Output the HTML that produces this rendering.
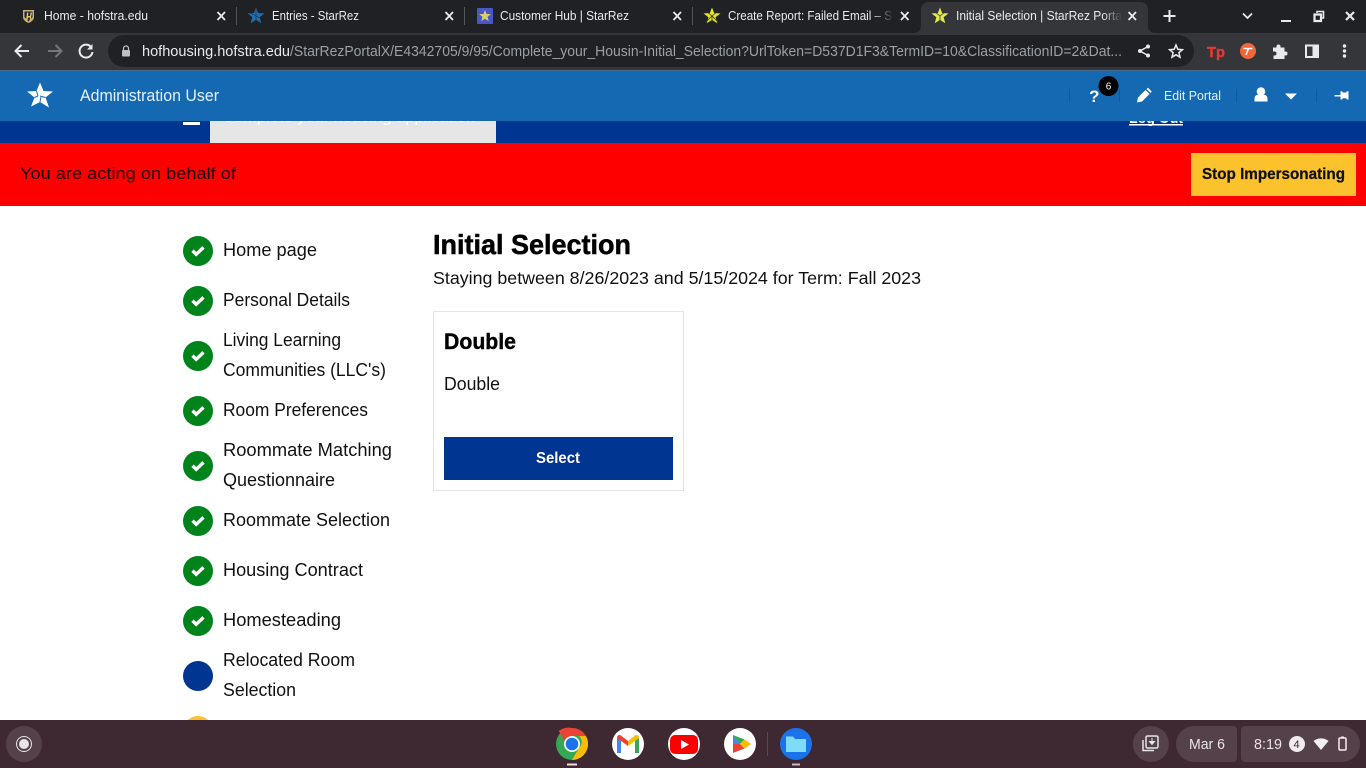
<!DOCTYPE html>
<html><head><meta charset="utf-8"><title>Initial Selection | StarRez Portal</title>
<style>
html,body{margin:0;padding:0;width:1366px;height:768px;overflow:hidden;background:#fff}
svg{display:block}
text{font-family:"Liberation Sans",sans-serif}
.c{font-size:12.500px;fill:#e8eaed}
.p{font-size:18px;fill:#111}
.x{stroke:#e8eaed;stroke-width:1.800;fill:none}
</style></head><body>
<svg width="1366" height="768" viewBox="0 0 1366 768" xmlns="http://www.w3.org/2000/svg">
<defs>
<linearGradient id="f1"><stop offset="0" stop-color="#202124" stop-opacity="0"/><stop offset="1" stop-color="#202124"/></linearGradient>
<linearGradient id="f2"><stop offset="0" stop-color="#35363a" stop-opacity="0"/><stop offset="1" stop-color="#35363a"/></linearGradient>
<path id="star" d="M0-8.500 2.200-2.900 8.500-2.600 3.600 1.200 5.300 7.300 0 3.900-5.300 7.300-3.600 1.200-8.500-2.600-2.200-2.900Z"/>
<path id="chk" d="M-5.500-.3-1.800 3.300 5.500-3.600" fill="none" stroke="#fff" stroke-width="3.400"/>
</defs>

<!-- page -->
<rect width="1366" height="768" fill="#fff"/>
<rect y="121" width="1366" height="22" fill="#003591"/>
<rect x="183" y="122" width="17" height="3" fill="#fff"/>
<rect x="210" y="121" width="286" height="22" fill="#e6e6e6"/>
<text x="222" y="122" font-size="15" fill="#fff" textLength="253" lengthAdjust="spacingAndGlyphs">Complete your housing application</text>
<text x="1129" y="123" font-size="15" font-weight="bold" fill="#fff" textLength="54" lengthAdjust="spacingAndGlyphs">Log Out</text>
<rect x="1129" y="124" width="54" height="1.500" fill="#fff"/>
<rect y="143" width="1366" height="63" fill="#f00"/>
<text x="20" y="179" font-size="17" fill="#200000" textLength="216" lengthAdjust="spacingAndGlyphs">You are acting on behalf of</text>
<rect x="1191" y="153" width="165" height="43" fill="#fcc22d"/>
<text x="1202" y="179" font-size="16" font-weight="bold" fill="#111" stroke="#111" stroke-width=".25" textLength="143" lengthAdjust="spacingAndGlyphs">Stop Impersonating</text>

<!-- sidebar -->
<g fill="#00831a">
<circle cx="198" cy="251" r="15"/><circle cx="198" cy="301" r="15"/><circle cx="198" cy="356" r="15"/><circle cx="198" cy="411" r="15"/><circle cx="198" cy="466" r="15"/><circle cx="198" cy="521" r="15"/><circle cx="198" cy="571" r="15"/><circle cx="198" cy="621" r="15"/>
</g>
<use href="#chk" x="198" y="251"/><use href="#chk" x="198" y="301"/><use href="#chk" x="198" y="356"/><use href="#chk" x="198" y="411"/><use href="#chk" x="198" y="466"/><use href="#chk" x="198" y="521"/><use href="#chk" x="198" y="571"/><use href="#chk" x="198" y="621"/>
<circle cx="198" cy="676" r="15" fill="#003591"/>
<circle cx="198" cy="731" r="15" fill="#fcc22d"/>
<text class="p" x="223" y="256" textLength="94" lengthAdjust="spacingAndGlyphs">Home page</text>
<text class="p" x="223" y="306" textLength="127" lengthAdjust="spacingAndGlyphs">Personal Details</text>
<text class="p" x="223" y="346" textLength="118" lengthAdjust="spacingAndGlyphs">Living Learning</text>
<text class="p" x="223" y="376" textLength="163" lengthAdjust="spacingAndGlyphs">Communities (LLC's)</text>
<text class="p" x="223" y="416" textLength="145" lengthAdjust="spacingAndGlyphs">Room Preferences</text>
<text class="p" x="223" y="456" textLength="169" lengthAdjust="spacingAndGlyphs">Roommate Matching</text>
<text class="p" x="223" y="486" textLength="112" lengthAdjust="spacingAndGlyphs">Questionnaire</text>
<text class="p" x="223" y="526" textLength="167" lengthAdjust="spacingAndGlyphs">Roommate Selection</text>
<text class="p" x="223" y="576" textLength="140" lengthAdjust="spacingAndGlyphs">Housing Contract</text>
<text class="p" x="223" y="626" textLength="118" lengthAdjust="spacingAndGlyphs">Homesteading</text>
<text class="p" x="223" y="666" textLength="132" lengthAdjust="spacingAndGlyphs">Relocated Room</text>
<text class="p" x="223" y="696" textLength="73" lengthAdjust="spacingAndGlyphs">Selection</text>

<!-- main -->
<text x="433" y="254" font-size="28" font-weight="bold" fill="#000" stroke="#000" stroke-width=".5" textLength="198" lengthAdjust="spacingAndGlyphs">Initial Selection</text>
<text x="433" y="284" font-size="17.500" fill="#111" textLength="488" lengthAdjust="spacingAndGlyphs">Staying between 8/26/2023 and 5/15/2024 for Term: Fall 2023</text>
<rect x="433.500" y="311.500" width="250" height="179" fill="#fff" stroke="#e2e6ea"/>
<text x="444" y="349" font-size="22" font-weight="bold" fill="#000" stroke="#000" stroke-width=".4" textLength="72" lengthAdjust="spacingAndGlyphs">Double</text>
<text x="444" y="390" font-size="18" fill="#111" textLength="56" lengthAdjust="spacingAndGlyphs">Double</text>
<rect x="444" y="437" width="229" height="43" fill="#003591"/>
<text x="536" y="463" font-size="15.500" font-weight="bold" fill="#fff" textLength="44" lengthAdjust="spacingAndGlyphs">Select</text>

<!-- portal header -->
<rect y="70" width="1366" height="51" fill="#1569b3"/>
<rect y="70" width="1366" height="1" fill="#4a6a8c"/>
<path d="M40 82.500 43.500 91 53 91.500 45.500 97.500 49 107.500 40 102 31 106.500 34.500 97.500 27 91.500 36.500 91Z" fill="#fff"/>
<path d="M36.500 91 38 96 M45.500 97.500 40 96 M40 102 41 97 M34.500 97.500 38 96" stroke="#1569b3" stroke-width="1" fill="none"/>
<text x="80" y="101" font-size="16.500" fill="#e3f0fb" textLength="139" lengthAdjust="spacingAndGlyphs">Administration User</text>
<g fill="#0f5a9c"><rect x="1069" y="89" width="1" height="13"/><rect x="1119" y="89" width="1" height="13"/><rect x="1236" y="89" width="1" height="13"/><rect x="1316" y="89" width="1" height="13"/></g>
<text x="1089" y="102" font-size="17" font-weight="bold" fill="#fff">?</text>
<circle cx="1108.500" cy="86" r="10" fill="#000"/>
<text x="1105.700" y="89.500" font-size="10" fill="#fff">6</text>
<path d="M1137 102.500 1138 97.500 1145.500 90 1149.500 94 1142 101.500Z" fill="#fff"/><path d="M1146.500 89 1148 87.800 1151.700 91.500 1150.500 93Z" fill="#fff"/>
<text x="1164" y="100" font-size="12.500" fill="#e3f0fb" textLength="57" lengthAdjust="spacingAndGlyphs">Edit Portal</text>
<circle cx="1261" cy="91.500" r="4.300" fill="#fff"/><path d="M1254.500 101.500v-3c0-2.500 2-3.800 3.500-3.800h6c1.500 0 3.500 1.300 3.500 3.800v3Z" fill="#fff"/>
<path d="M1285 93.500h12l-6 6Z" fill="#fff"/>
<path d="M1334.500 95h6v-3.800h1.500l1 1.300h3l1-1.300h1.500v8.300H1347l-1-1.300h-3l-1 1.300h-1.500V96.500h-6Z" fill="#fff"/>

<!-- tab strip -->
<rect width="1366" height="33" fill="#202124"/>
<g fill="#55565a"><rect x="236" y="7" width="1" height="18"/><rect x="464" y="7" width="1" height="18"/><rect x="692" y="7" width="1" height="18"/></g>
<path d="M913 33c6 0 8-3 8-8V10c0-5 3-8 8-8h211c5 0 8 3 8 8v15c0 5 2 8 8 8Z" fill="#35363a"/>
<!-- favicons -->
<path d="M23 10h11v7c0 3-3 5-5.500 6C26 22 23 20 23 17Z" fill="#c9b36a"/><path d="M24.500 11.500h8v5.500l-4 4.500-4-4.500Z" fill="#1c2150"/><path d="M27 12.500h1.500l-.5 3.500h2l.5-3.500H32l-1.500 8h-1l.5-3h-2l-.5 3H26Z" fill="#e8c84a"/>
<use href="#star" x="256" y="16" fill="#1f6fb2"/><path d="M256 9v14M250 13l12 6" stroke="#202124" stroke-width=".5"/>
<rect x="477" y="8" width="16" height="16" rx="1" fill="#4a56c8"/><use href="#star" transform="translate(485 16) scale(.7)" fill="#d8cf6a"/>
<use href="#star" x="712" y="16" fill="#e2e62b"/><path d="M707 12l5 4 5-4M712 16v6M706 22l6-6 6 6" stroke="#3a3a1c" stroke-width=".8" fill="none"/>
<use href="#star" x="940" y="16" fill="#e6e84a"/><path d="M935 12l5 4 5-4M940 16v6" stroke="#35363a" stroke-width=".8" fill="none"/>
<!-- tab titles -->
<text class="c" x="44" y="20" textLength="104" lengthAdjust="spacingAndGlyphs">Home - hofstra.edu</text>
<text class="c" x="272" y="20" textLength="87" lengthAdjust="spacingAndGlyphs">Entries - StarRez</text>
<text class="c" x="500" y="20" textLength="129" lengthAdjust="spacingAndGlyphs">Customer Hub | StarRez</text>
<text class="c" x="728" y="20" textLength="164" lengthAdjust="spacingAndGlyphs">Create Report: Failed Email – S</text>
<rect x="872" y="6" width="22" height="20" fill="url(#f1)"/>
<text class="c" x="956" y="20" textLength="166" lengthAdjust="spacingAndGlyphs">Initial Selection | StarRez Porta</text>
<rect x="1102" y="6" width="20" height="20" fill="url(#f2)"/>
<g class="x">
<path d="M217.500 12 225 20M225 12 217.500 20"/><path d="M445.500 12 453 20M453 12 445.500 20"/><path d="M673.500 12 681 20M681 12 673.500 20"/><path d="M901 12 908.500 20M908.500 12 901 20"/><path d="M1128.500 12 1136 20M1136 12 1128.500 20"/>
<path d="M1169.500 10v12M1163.500 16h12" stroke-width="2"/>
<path d="M1243 13.500 1247.500 18 1252 13.500" stroke-width="1.700"/>
<path d="M1281 21h10" stroke-width="2"/>
<path d="M1314.500 14.500h6.500v6.500h-6.500Z" stroke-width="2.200"/><path d="M1317 13v-1.500h6.500v6.500H1322" stroke-width="1.600"/>
<path d="M1346 12 1354 20M1354 12 1346 20" stroke-width="2.200"/>
</g>

<!-- toolbar -->
<rect y="33" width="1366" height="37" fill="#35363a"/>
<path d="M29 51H16M21.500 45 15.500 51 21.500 57" fill="none" stroke="#e8eaed" stroke-width="2"/>
<path d="M48 51H61M55.500 45 61.500 51 55.500 57" fill="none" stroke="#74767a" stroke-width="2"/>
<path d="M91.500 47.500A6.500 6.500 0 1 0 92.500 52" fill="none" stroke="#e8eaed" stroke-width="2"/><path d="M92.500 44v5.500H87Z" fill="#e8eaed"/>
<rect x="108" y="35" width="1086" height="32" rx="16" fill="#202124"/>
<rect x="122" y="50" width="8" height="6.500" rx="1" fill="#bdc1c6"/><path d="M123.500 50v-1.500a2.500 2.500 0 0 1 5 0V50" fill="none" stroke="#bdc1c6" stroke-width="1.200"/>
<text x="142" y="56" font-size="14.500" fill="#e8eaed" textLength="148" lengthAdjust="spacingAndGlyphs">hofhousing.hofstra.edu</text>
<text x="290" y="56" font-size="14.500" fill="#9aa0a6" textLength="832" lengthAdjust="spacingAndGlyphs">/StarRezPortalX/E4342705/9/95/Complete_your_Housin-Initial_Selection?UrlToken=D537D1F3&amp;TermID=10&amp;ClassificationID=2&amp;Dat...</text>
<path d="M1148 46.500 1140 51 1148 55.500" fill="none" stroke="#e8eaed" stroke-width="1.500"/><circle cx="1148" cy="46.500" r="2" fill="#e8eaed"/><circle cx="1140" cy="51" r="2" fill="#e8eaed"/><circle cx="1148" cy="55.500" r="2" fill="#e8eaed"/>
<path d="M1176 45 1177.800 49.300 1182.400 49.700 1178.900 52.700 1180 57.200 1176 54.800 1172 57.200 1173.100 52.700 1169.600 49.700 1174.200 49.300Z" fill="none" stroke="#e8eaed" stroke-width="1.500"/>
<text x="1207" y="57" font-size="15" font-weight="bold" fill="#e53935" stroke="#e53935" stroke-width=".4" textLength="18" lengthAdjust="spacingAndGlyphs">Tp</text>
<circle cx="1248" cy="51" r="8" fill="#f0673a"/><path d="M1243.500 48.500h9M1248.500 48.500 1246 55" stroke="#fff" stroke-width="1.500" fill="none"/>
<path d="M1273 47.500h3.500v-1a2 2 0 0 1 4 0v1h4v4h1a2 2 0 0 1 0 4h-1v3.500h-11v-3.500h1a2 2 0 0 0 0-4h-1.500Z" fill="#e8eaed"/>
<rect x="1306" y="45.500" width="12" height="11.500" fill="none" stroke="#e8eaed" stroke-width="2"/><rect x="1312.500" y="45.500" width="5.500" height="11.500" fill="#e8eaed"/>
<g fill="#e8eaed"><circle cx="1344.500" cy="46" r="1.700"/><circle cx="1344.500" cy="51" r="1.700"/><circle cx="1344.500" cy="56" r="1.700"/></g>

<!-- shelf -->
<rect y="720" width="1366" height="48" fill="#3e2832"/>
<circle cx="24" cy="744" r="18" fill="#55414a"/>
<circle cx="24" cy="744" r="7.500" fill="none" stroke="#e8e4e6" stroke-width="1"/><circle cx="24" cy="744" r="5" fill="#e8e4e6"/>
<!-- chrome -->
<circle cx="572" cy="744" r="16" fill="#34a853"/>
<path d="M572 728a16 16 0 0 1 13.900 8H572a8 8 0 0 0-7.500 5l-5.800-10A16 16 0 0 1 572 728Z" fill="#ea4335"/>
<path d="M585.900 736A16 16 0 0 1 572 760l7-12a8 8 0 0 0 0-12Z" fill="#fbbc04"/>
<circle cx="572" cy="744" r="8" fill="#fff"/><circle cx="572" cy="744" r="6.300" fill="#1a73e8"/>
<rect x="567" y="763.500" width="10" height="2" fill="#f3d9e3"/>
<!-- gmail -->
<circle cx="628" cy="744" r="16" fill="#fff"/>
<path d="M617 753v-15l4 2v13Z" fill="#4285f4"/><path d="M635 753v-13l4-2v15Z" fill="#34a853"/>
<path d="M617 738c0-3 2.500-3.500 4-2.500l7 5.500v5l-11-8Z" fill="#ea4335"/><path d="M628 741l7-5.500c1.500-1 4-.5 4 2.500l-4 3-7 5Z" fill="#fbbc04"/>
<!-- youtube -->
<circle cx="684" cy="744" r="16" fill="#fff"/>
<rect x="670" y="735" width="28" height="19" rx="5" fill="#f00"/><path d="M681 740v9l8-4.500Z" fill="#fff"/>
<!-- play -->
<circle cx="740" cy="744" r="16" fill="#fff"/>
<path d="M733 735v9h7Z" fill="#4285f4"/><path d="M733 735 740 744 744.500 739.500Z" fill="#34a853"/><path d="M744.500 739.500 740 744 744.500 748.500 751 744Z" fill="#fbbc04"/><path d="M733 753 740 744H733ZM733 753 744.500 748.500 740 744Z" fill="#ea4335"/>
<rect x="767" y="732" width="1" height="24" fill="#5c4751"/>
<!-- files -->
<circle cx="796" cy="744" r="16" fill="#1a73e8"/>
<path d="M786 736.500h7l2 2.500h11v13h-20Z" fill="#7fdcf9"/>
<rect x="792" y="763.500" width="8" height="2" fill="#c8bcc2"/>
<!-- status -->
<circle cx="1151" cy="744" r="18" fill="#55414a"/>
<rect x="1146" y="736" width="12" height="12" rx="1.500" fill="none" stroke="#e8e4e6" stroke-width="1.500"/>
<path d="M1143 740v10.500h11" fill="none" stroke="#e8e4e6" stroke-width="1.500"/>
<path d="M1152 738v5M1149.500 741.500 1152 744.500 1154.500 741.500Z" fill="#e8e4e6" stroke="#e8e4e6"/>
<path d="M1194 726h39a4 4 0 0 1 4 4v28a4 4 0 0 1-4 4h-39a18 18 0 0 1 0-36Z" fill="#55414a"/>
<text x="1189" y="749" font-size="14.500" fill="#e8e4e6" textLength="36" lengthAdjust="spacingAndGlyphs">Mar 6</text>
<path d="M1245 726h97a18 18 0 0 1 0 36h-97a4 4 0 0 1-4-4v-28a4 4 0 0 1 4-4Z" fill="#55414a"/>
<text x="1254" y="749" font-size="14.500" fill="#e8e4e6" textLength="28" lengthAdjust="spacingAndGlyphs">8:19</text>
<circle cx="1297" cy="744" r="8" fill="#efebed"/>
<text x="1293.500" y="748" font-size="11" fill="#3e2832">4</text>
<path d="M1313.500 741a12 12 0 0 1 15 0L1321 750Z" fill="#f2eff0"/>
<rect x="1339" y="738" width="7" height="12" rx="1" fill="none" stroke="#f2eff0" stroke-width="1.500"/><rect x="1341" y="736.500" width="3" height="1.500" fill="#f2eff0"/>
</svg>
</body></html>
